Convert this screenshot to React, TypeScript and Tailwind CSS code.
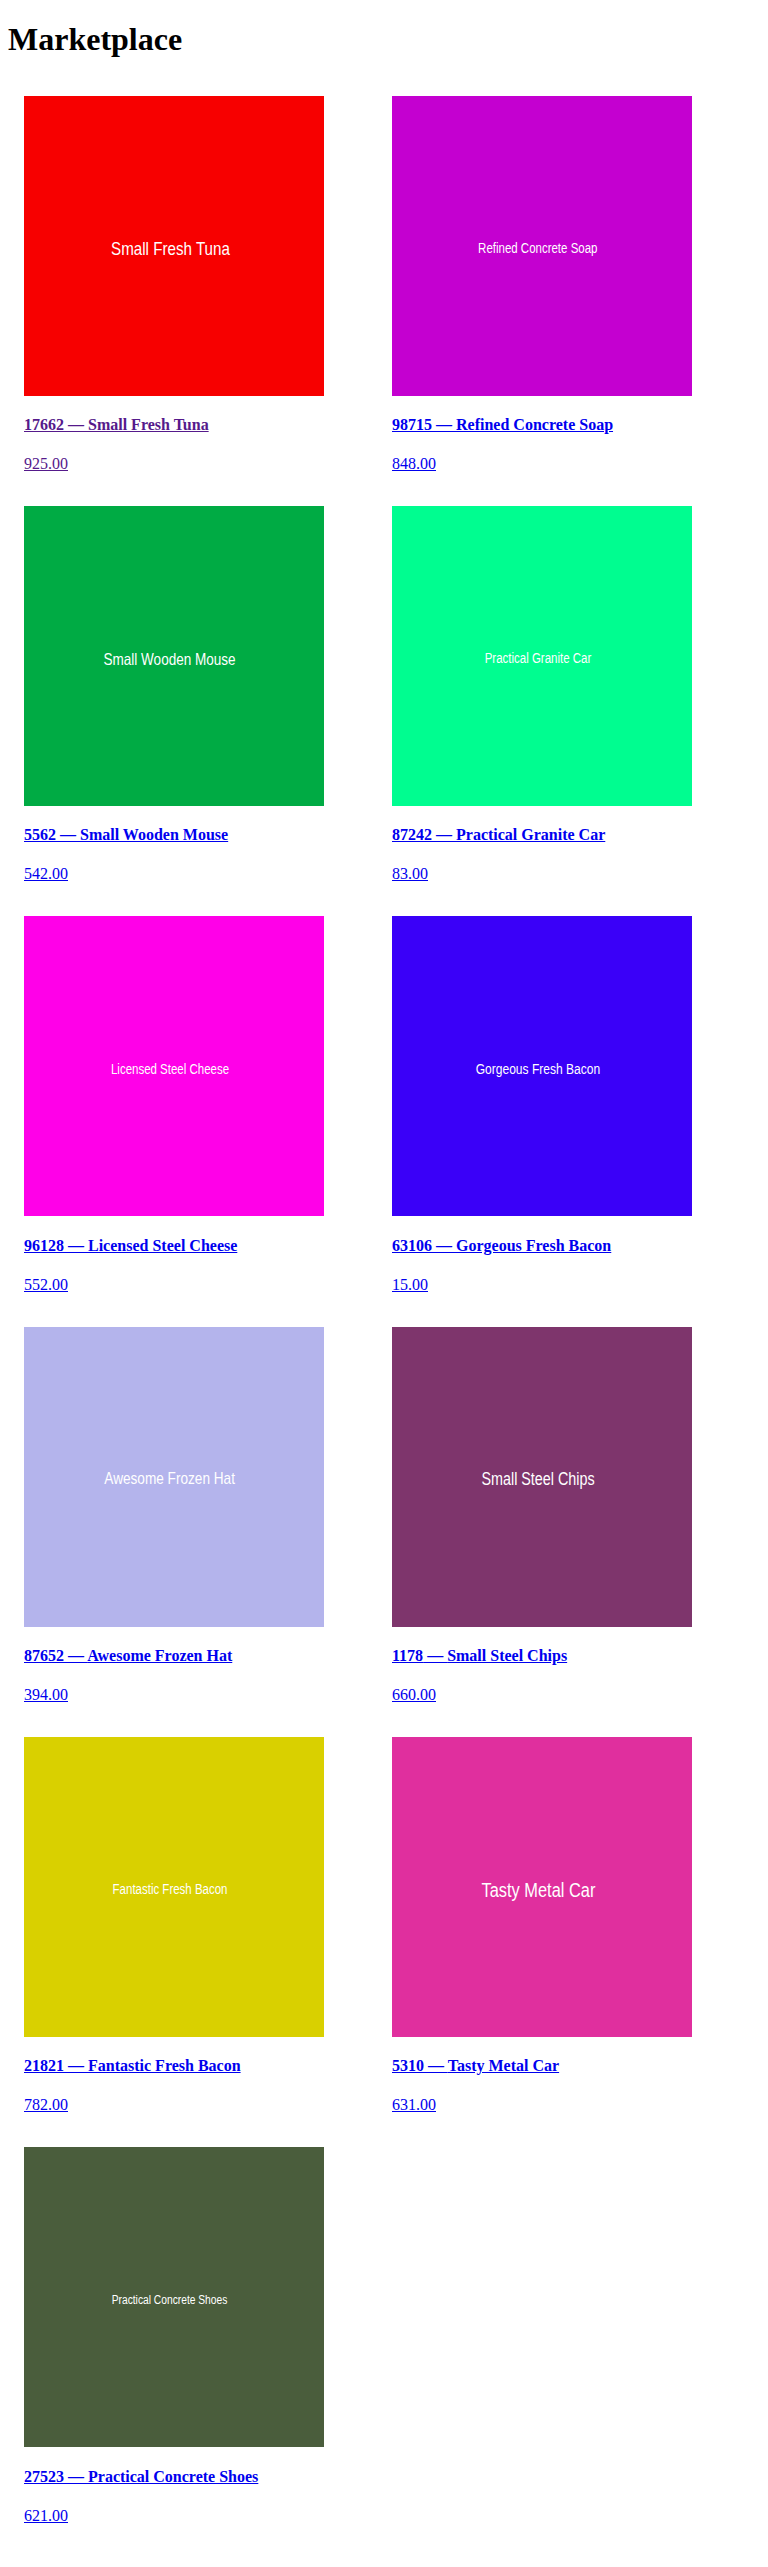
type Product = {
  id: number;
  name: string;
  price: string;
  color: string;
  size: string;
  visited?: boolean;
};

const products: Product[] = [
  { id: 17662, name: "Small Fresh Tuna", price: "925.00", color: "bg-[#f70000]", size: "text-[18.5px]", visited: true },
  { id: 98715, name: "Refined Concrete Soap", price: "848.00", color: "bg-[#c400d0]", size: "text-[14px]" },
  { id: 5562, name: "Small Wooden Mouse", price: "542.00", color: "bg-[#00ab44]", size: "text-[16.5px]" },
  { id: 87242, name: "Practical Granite Car", price: "83.00", color: "bg-[#00fd90]", size: "text-[14px]" },
  { id: 96128, name: "Licensed Steel Cheese", price: "552.00", color: "bg-[#ff00e8]", size: "text-[14px]" },
  { id: 63106, name: "Gorgeous Fresh Bacon", price: "15.00", color: "bg-[#3a00f8]", size: "text-[14.7px]" },
  { id: 87652, name: "Awesome Frozen Hat", price: "394.00", color: "bg-[#b4b4ec]", size: "text-[16.6px]" },
  { id: 1178, name: "Small Steel Chips", price: "660.00", color: "bg-[#7e356c]", size: "text-[17.5px]" },
  { id: 21821, name: "Fantastic Fresh Bacon", price: "782.00", color: "bg-[#d9d000]", size: "text-[14px]" },
  { id: 5310, name: "Tasty Metal Car", price: "631.00", color: "bg-[#e02f9e]", size: "text-[20px]" },
  { id: 27523, name: "Practical Concrete Shoes", price: "621.00", color: "bg-[#4a5d3c]", size: "text-[12.5px]" },
];

function ProductCard({ p }: { p: Product }) {
  const link = p.visited ? "text-[#551a8b]" : "text-[#0000ee]";
  return (
    <div className="flex flex-col items-start">
      {/* placeholder picture */}
      <div className={`flex h-[300px] w-[300px] items-center justify-center pt-[6px] pr-2 ${p.color}`}>
        <span
          className={`scale-x-[0.82] whitespace-nowrap font-['Liberation_Sans',Arial,sans-serif] leading-normal text-white ${p.size}`}
        >
          {p.name}
        </span>
      </div>
      <a
        href="#"
        className={`mt-[20.5px] text-[16px] font-bold leading-[18.4px] underline ${link}`}
      >
        {p.id} — {p.name}
      </a>
      <a href="#" className={`mt-[20.5px] mb-4 text-[16px] leading-[18.4px] underline ${link}`}>
        {p.price}
      </a>
    </div>
  );
}

export default function App() {
  return (
    <div className="min-h-screen bg-white px-2 pb-2 font-['Liberation_Serif','Times_New_Roman',serif] text-black">
      <h1 className="my-[21.44px] text-[32px] font-bold leading-[36.8px]">Marketplace</h1>
      <div className="grid grid-cols-2 gap-x-4 gap-y-[16.5px] p-4">
        {products.map((p) => (
          <ProductCard key={p.id} p={p} />
        ))}
      </div>
    </div>
  );
}
